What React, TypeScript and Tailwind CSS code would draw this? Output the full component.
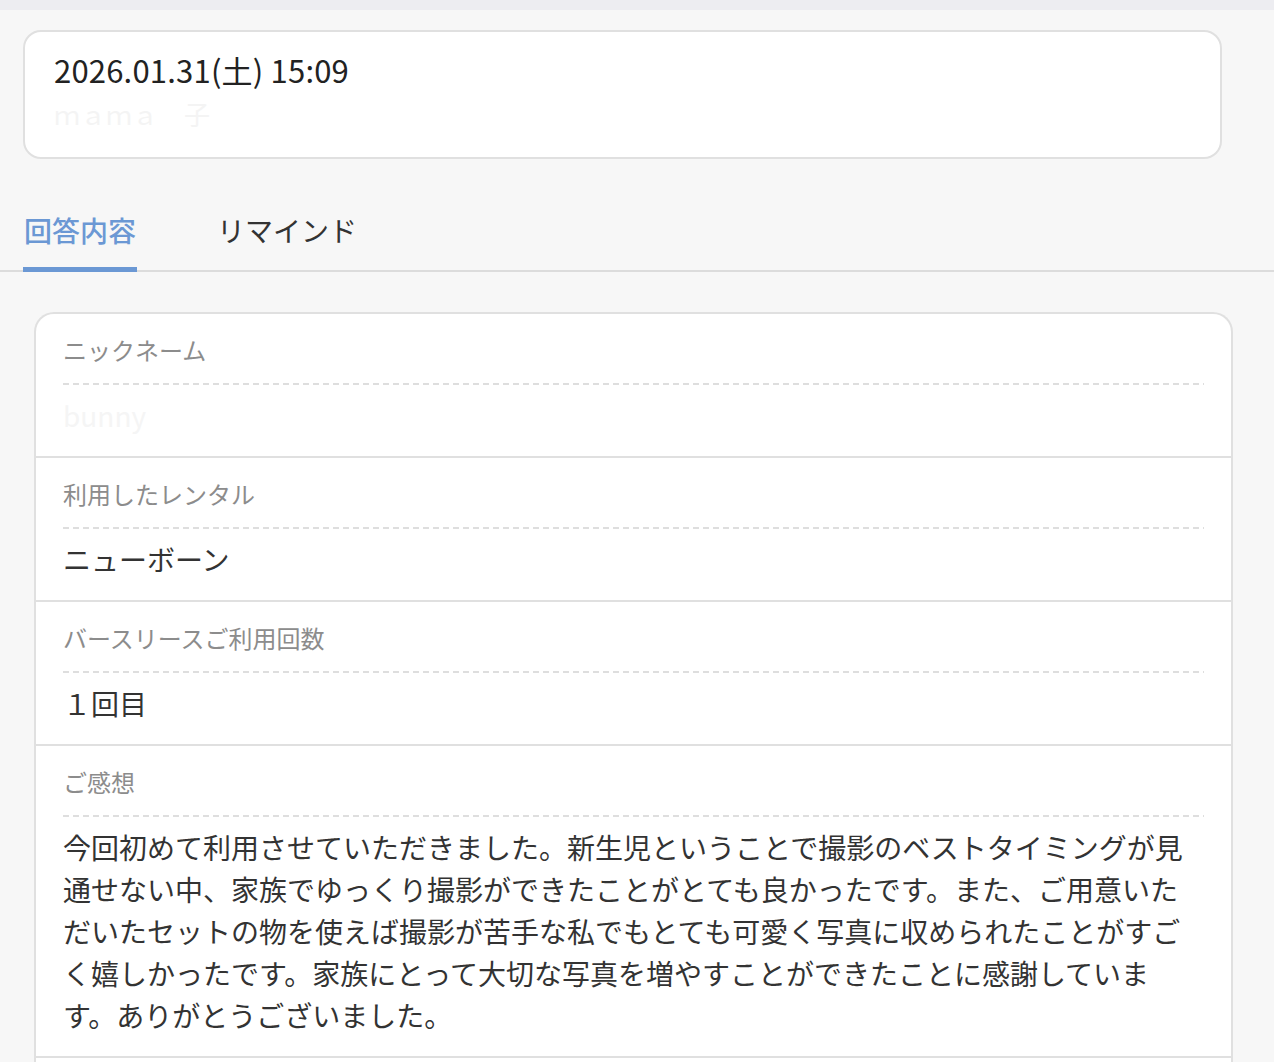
import React from "react";

const font = { fontFamily: '"Noto Sans CJK JP", "Noto Sans", sans-serif' };

function Dashed() {
  return (
    <div className="h-[2px] w-full bg-[repeating-linear-gradient(to_right,#dedede_0px,#dedede_6px,transparent_6px,transparent_10px)]" />
  );
}

function Row({ label, children }: { label: string; children: React.ReactNode }) {
  return (
    <div className="px-[27px] pt-[18px] pb-[20px] border-b-2 border-[#e0e0e0]">
      <div className="text-[24px] leading-[36px] text-[#8c8c8c]">{label}</div>
      <div className="mt-[15px]">
        <Dashed />
      </div>
      <div className="mt-[9px] max-w-[1128px] text-[28px] leading-[42px] text-[#333]">{children}</div>
    </div>
  );
}

export default function App() {
  return (
    <div className="min-h-screen bg-[#f7f7f7]" style={font}>
      <div className="h-[10px] bg-[#ededf1]" />
      <div className="pl-[23px] pr-[52px] pt-[20px]">
        <div className="h-[129px] rounded-[18px] border-2 border-[#e0e0e0] bg-white px-[29px] pt-[16px]">
          <div className="text-[31px] leading-[44px] tracking-[0.2px] text-[#222]">2026.01.31(土) 15:09</div>
          <div className="mt-[2px] text-[26px] leading-[40px] text-[#f4f4f4]">ｍａｍａ　子</div>
        </div>
      </div>
      <div className="mt-[50px] border-b-2 border-[#dcdcdc]">
        <div className="flex gap-[81px] pl-[24px]">
          <div className="relative pb-[19px] text-[28px] leading-[42px] font-medium text-[#6b98d4]">
            回答内容
            <div className="absolute left-[-1px] right-[-1px] bottom-[-2px] h-[5px] bg-[#6b98d4]" />
          </div>
          <div className="pb-[19px] text-[28px] leading-[42px] text-[#333]">リマインド</div>
        </div>
      </div>
      <div className="pl-[34px] pr-[41px] pt-[40px]">
        <div className="rounded-t-[20px] border-2 border-b-0 border-[#e0e0e0] bg-white">
          <Row label="ニックネーム">
            <span className="text-[#f5f5f5]">bunny</span>
          </Row>
          <Row label="利用したレンタル">ニューボーン</Row>
          <Row label="バースリースご利用回数">１回目</Row>
          <Row label="ご感想">
            今回初めて利用させていただきました。新生児ということで撮影のベストタイミングが見通せない中、家族でゆっくり撮影ができたことがとても良かったです。また、ご用意いただいたセットの物を使えば撮影が苦手な私でもとても可愛く写真に収められたことがすごく嬉しかったです。家族にとって大切な写真を増やすことができたことに感謝しています。ありがとうございました。
          </Row>
          <div className="h-[60px]" />
        </div>
      </div>
    </div>
  );
}
